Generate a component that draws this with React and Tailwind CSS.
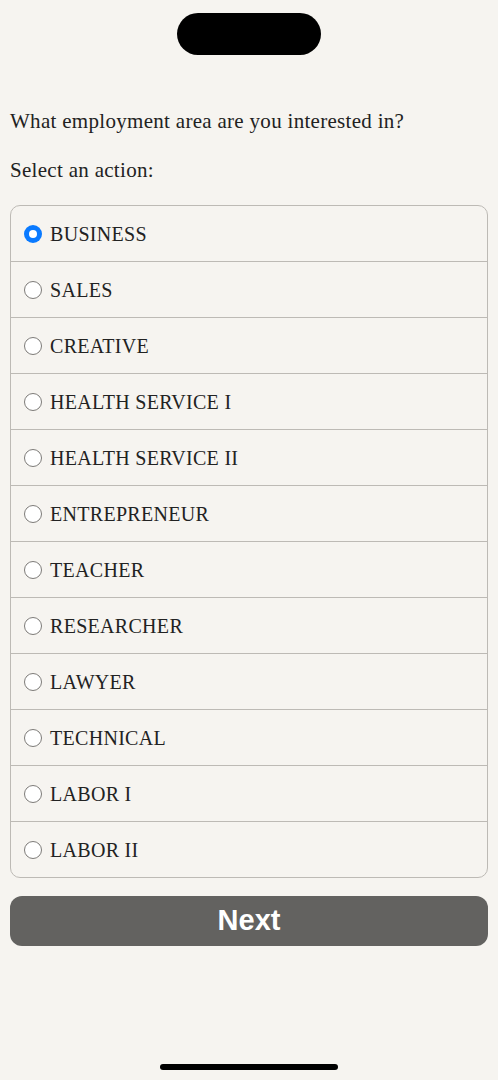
import { useState } from 'react';

const options = [
  'BUSINESS',
  'SALES',
  'CREATIVE',
  'HEALTH SERVICE I',
  'HEALTH SERVICE II',
  'ENTREPRENEUR',
  'TEACHER',
  'RESEARCHER',
  'LAWYER',
  'TECHNICAL',
  'LABOR I',
  'LABOR II',
];

function Radio({ checked }) {
  if (checked) {
    return (
      <span className="w-[18px] h-[18px] rounded-full bg-[#0a7aff] flex items-center justify-center shrink-0">
        <span className="w-[8px] h-[8px] rounded-full bg-white"></span>
      </span>
    );
  }
  return <span className="w-[18px] h-[18px] rounded-full border-[1.5px] border-[#7d7b78] bg-white shrink-0"></span>;
}

export default function App() {
  const [selected, setSelected] = useState('BUSINESS');

  return (
    <div className="min-h-[1080px] bg-[#f6f4f0] flex flex-col font-['Liberation_Serif',serif] text-[#222]">
      {/* Dynamic island */}
      <div className="flex justify-center pt-[13px]">
        <div className="w-[144px] h-[42px] bg-black rounded-full"></div>
      </div>

      <div className="px-[10px]">
        <p className="mt-[54px] text-[21px] leading-[24px] tracking-[0.3px]">What employment area are you interested in?</p>
        <p className="mt-[25px] text-[21px] leading-[24px] tracking-[0.3px]">Select an action:</p>

        <div className="mt-[23px] border border-[#bdbab5] rounded-[10px] overflow-hidden">
          {options.map((opt, i) => (
            <button
              key={opt}
              onClick={() => setSelected(opt)}
              className={`w-full flex items-center gap-[8px] pl-[13px] text-left ${i > 0 ? 'h-[56px] border-t border-[#bdbab5]' : 'h-[55px]'}`}
            >
              <Radio checked={selected === opt} />
              <span className="text-[20px] leading-[24px] tracking-[0.3px] text-[#222]">{opt}</span>
            </button>
          ))}
        </div>

        <button className="mt-[18px] w-full h-[50px] rounded-[12px] bg-[#636260] text-white font-bold text-[29px] font-['Liberation_Sans',sans-serif] flex items-center justify-center">
          Next
        </button>
      </div>

      <div className="mt-auto flex justify-center pb-[10px]">
        <div className="w-[178px] h-[6px] bg-black rounded-full"></div>
      </div>
    </div>
  );
}
